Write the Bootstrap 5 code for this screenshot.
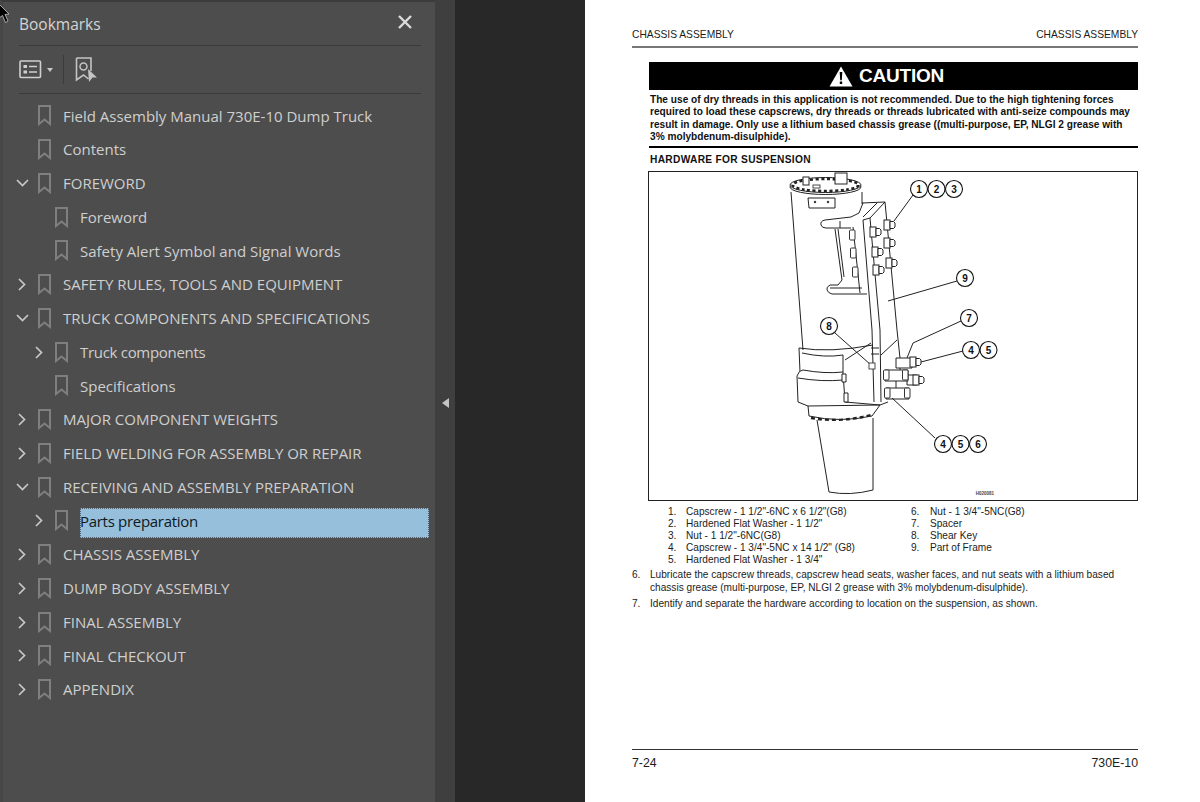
<!DOCTYPE html>
<html lang="en">
<head>
  <meta charset="UTF-8" />
  <meta name="viewport" content="width=device-width, initial-scale=1" />
  <title>Bookmarks</title>
  <link href="https://cdn.jsdelivr.net/npm/bootstrap@5.3.0/dist/css/bootstrap.min.css" rel="stylesheet" />
  <style>
    html, body { height: 802px; overflow: hidden; background: #282828; }
    .viewer { height: 802px; position: relative; }
    .side-pane { width: 435px; background: #4d4d4d; border-top: 2px solid #3c3c3c; border-left: 3px solid #474747; font-family: "Open Sans", "Noto Sans", sans-serif; }
    .pane-head { height: 44px; margin: 0 14px 0 16px; border-bottom: 1px solid #3a3a3a; color: #d4d4d4; font-size: 15.5px; }
    .pane-title { margin-top: 2px; }
    .pane-tools { height: 48px; margin: 0 14px 0 16px; border-bottom: 1px solid #3a3a3a; }
    .tool-sep { width: 1px; height: 29px; background: #3c3c3c; margin: 0 11px 0 10px; }
    .caret-down { width: 0; height: 0; border-left: 3.5px solid transparent; border-right: 3.5px solid transparent; border-top: 4px solid #c8c8c8; margin: 0 0 0 5px; }
    .mark-list { margin: 5px 0 0; padding: 0; list-style: none; }
    .mark-row { height: 33.75px; color: #cfcfcf; font-size: 15px; white-space: nowrap; padding-left: 10px; }
    .mark-row.lvl2 { padding-left: 27px; }
    .mark-row.tight { letter-spacing: -.3px; }
    .chev-slot { width: 18px; flex: none; }
    .mark-ico { margin: 0 12px 0 7px; flex: none; }
    .mark-sel { background: #95bfdb; color: #101820; outline: 1px dotted #50606c; outline-offset: -1px; width: 349px; height: 30px; line-height: 26px; margin-top: 5px; }
    .collapse-strip { width: 20px; background: #3f3f3f; }
    .collapse-arrow { width: 0; height: 0; border-top: 5.5px solid transparent; border-bottom: 5.5px solid transparent; border-right: 7px solid #c4c4c4; margin-top: 3px; }
    .dark-gap { width: 130px; background: #282828; }
    .doc-page { width: 615px; background: #fff; color: #1c1c1c; padding: 28px 62px 0 47px; font-family: "Liberation Sans", Arial, sans-serif; font-size: 10.12px; line-height: 12.1px; }
    .run-head { height: 20px; border-bottom: 2px solid #777; font-size: 10.25px; line-height: 14px; }
    .page-body { padding-left: 17px; }
    .caution-bar { height: 28px; margin-top: 14px; padding-right: 14px; background: #000; color: #fff; font-size: 19px; font-weight: 700; line-height: 28px; letter-spacing: -.2px; gap: 6px; }
    .caution-text { font-weight: 700; font-size: 10.13px; line-height: 12.3px; color: #111; padding: 4px 0 4px 1px; border-bottom: 2.5px solid #000; height: 58px; }
    .hw-title { font-weight: 700; font-size: 10.2px; margin: 6px 0 0 1px; height: 17px; color: #111; letter-spacing: .3px; }
    .fig-box { height: 330px; margin-left: -1px; border: 1px solid #222; }
    .fig-box svg { display: block; }
    .parts-wrap { padding: 5px 0 0 19px; margin-bottom: -1px; }
    .parts-col { width: 243px; }
    .part-line { display: flex; }
    .part-num { width: 18px; flex: none; }
    .parts-col + div .part-num { width: 19px; }
    .step-line { display: flex; margin-left: -17px; }
    .step-num { width: 18px; flex: none; }
    .run-foot { position: absolute; left: 47px; right: 62px; top: 749px; border-top: 1.5px solid #333; padding-top: 6px; font-size: 12.3px; line-height: 14px; }
    .mouse-ptr { position: absolute; left: 0; top: 4px; }
  </style>
</head>
<body>
  <div class="viewer d-flex">
    <div class="side-pane flex-shrink-0">
      <div class="pane-head d-flex align-items-center justify-content-between">
        <span class="pane-title">Bookmarks</span>
        <svg width="16" height="16" viewBox="0 0 16 16" class="me-2 mb-1"><path d="M2 2 14 14M14 2 2 14" stroke="#dcdcdc" stroke-width="2.4" fill="none"/></svg>
      </div>
      <div class="pane-tools d-flex align-items-center">
        <svg width="23" height="19" viewBox="0 0 23 19">
          <rect x="1" y="1" width="20.5" height="16.5" rx="1" fill="none" stroke="#cfcfcf" stroke-width="1.6"/>
          <rect x="4.5" y="5" width="3.5" height="3" fill="#cfcfcf"/><rect x="4.5" y="10.5" width="3.5" height="3" fill="#cfcfcf"/>
          <path d="M10 6.5h8M10 12h8" stroke="#cfcfcf" stroke-width="1.6"/>
        </svg>
        <span class="caret-down"></span>
        <span class="tool-sep"></span>
        <svg width="23" height="26" viewBox="0 0 23 26">
          <path d="M1.5 1h14.500v13M1.500 1v22l7-5 5 4" fill="none" stroke="#c4c4c4" stroke-width="1.6"/>
          <circle cx="8.5" cy="9.5" r="3.5" fill="none" stroke="#c4c4c4" stroke-width="1.5"/>
          <path d="M13 12 22 20.500 17.500 20.500 14 25z" fill="#c4c4c4"/>
        </svg>
      </div>
      <ul class="mark-list" id="marks"></ul>
    </div>
    <div class="collapse-strip flex-shrink-0 d-flex align-items-center justify-content-center"><span class="collapse-arrow"></span></div>
    <div class="dark-gap flex-shrink-0"></div>
    <div class="doc-page flex-shrink-0 position-relative">
      <div class="run-head d-flex justify-content-between"><span>CHASSIS ASSEMBLY</span><span>CHASSIS ASSEMBLY</span></div>
      <div class="page-body">
        <div class="caution-bar d-flex justify-content-center align-items-center">
          <svg width="24" height="21" viewBox="0 0 24 21"><path d="M12 .5 23.500 20.500H.5z" fill="#fff"/><path d="M10.700 6h2.600l-.5 8.200h-1.600zM10.800 15.500h2.400v2.600h-2.400z" fill="#000"/></svg>
          <span>CAUTION</span>
        </div>
        <div class="caution-text">The use of dry threads in this application is not recommended. Due to the high tightening forces required to load these capscrews, dry threads or threads lubricated with anti-seize compounds may result in damage. Only use a lithium based chassis grease ((multi-purpose, EP, NLGI 2 grease with 3% molybdenum-disulphide).</div>
        <div class="hw-title">HARDWARE FOR SUSPENSION</div>
        <div class="fig-box">
          <svg width="488" height="328" viewBox="649 172 488 328" font-family="Liberation Sans, Arial, sans-serif">
            <defs>
              <g id="bolt"><rect x="-5" y="-5" width="6" height="10" fill="#fff" stroke="#222" stroke-width="1"/><path d="M1-3.500h3.500l1.500 1.500v4l-1.500 1.500H1z" fill="#fff" stroke="#222" stroke-width="1"/></g>
              <g id="boltsm"><rect x="-2.500" y="-5" width="5.500" height="10" rx="1" fill="#fff" stroke="#333" stroke-width="1"/></g>
            </defs>
            <g fill="none" stroke="#222" stroke-width="1" stroke-linejoin="round">
              <!-- cone and its flange -->
              <path d="M817 420 829 492Q850 496 873 490L873 418" fill="#fff"/>
              <path d="M808 406 809 416Q840 423 872 416L880 405" fill="#fff"/>
              <path d="M811 418q30 5 60-3" stroke-width="2.400" stroke-dasharray="4 3"/>
              <!-- barrel -->
              <path d="M791 192 803 350M862 192V204"/>
              <path d="M808 198h27v10h-26z"/>
              <circle cx="815" cy="202" r=".8" fill="#222"/><circle cx="828" cy="202" r=".8" fill="#222"/>
              <!-- bracket arms -->
              <path d="M863 203 859 213 851 217 825 220Q820 221 821 225 822 228 826 228L851 228"/>
              <path d="M835 229 842 280 838 285 830 285Q826 287 827 290 828 293 832 294L867 294"/>
              <path d="M838 229 844 277M830 288H862M853 227 860 293M840 221V228"/>
              <!-- frame plate -->
              <path d="M862 203 885 202 897 330 900 358"/>
              <path d="M885 202 870 218 863 220 872 330 874 402M870 218 880 330 881 402M877 203 863 217"/>
              <path d="M897 340 881 355M845 360 871 343"/>
              <path d="M871 348H879M871 354H879"/>
              <path d="M880 405 888 402"/>
              <!-- collar -->
              <path d="M799 348Q830 353 873 345" fill="none"/>
              <path d="M799 348 800 372M802 353Q825 358 843 355"/>
              <path d="M797 376Q799 370 803 370Q825 374 843 372L845 402 880 405 808 406 798 402z" fill="#fff"/>
              <path d="M843 355V372M798 378Q822 382 843 380"/>
              <rect x="842" y="374" width="4" height="8" fill="#fff"/><rect x="844" y="393" width="4" height="9" fill="#fff"/>
              <!-- spacer blocks on the lower bolts -->
              <rect x="896" y="358" width="16" height="10" fill="#fff"/>
              <path d="M900 368v3M896 381v7"/>
              <rect x="907" y="375" width="10" height="10" fill="#fff"/>
              <rect x="885" y="370" width="23" height="11" fill="#fff"/>
              <rect x="886" y="388" width="23" height="11" fill="#fff"/>
            </g>
            <use href="#bolt" x="915" y="362"/><use href="#bolt" x="918" y="380"/>
            <use href="#boltsm" x="886" y="375"/><use href="#boltsm" x="887" y="393"/><use href="#boltsm" x="905" y="375"/><use href="#boltsm" x="907" y="393"/>
            <use href="#bolt" x="889" y="225"/><use href="#bolt" x="889" y="243"/><use href="#bolt" x="891" y="263"/>
            <use href="#bolt" x="875" y="232"/><use href="#bolt" x="877" y="252"/><use href="#bolt" x="878" y="270"/>
            <use href="#boltsm" x="852" y="235"/><use href="#boltsm" x="853" y="253"/><use href="#boltsm" x="855" y="272"/>
            <!-- flange on top of the barrel -->
            <ellipse cx="825.500" cy="187" rx="35.500" ry="7.500" fill="#fff" stroke="#222" stroke-width="1"/>
            <ellipse cx="825.500" cy="185" rx="35.500" ry="7.500" fill="#fff" stroke="#222" stroke-width="1"/>
            <ellipse cx="825.500" cy="185" rx="33" ry="6" fill="none" stroke="#222" stroke-width="2.600" stroke-dasharray="3 2.500"/>
            <rect x="803" y="177" width="6" height="8" fill="#fff" stroke="#222" stroke-width="1"/>
            <rect x="835" y="173" width="12" height="11" fill="#fff" stroke="#222" stroke-width="1"/>
            <rect x="813" y="185" width="7" height="3" fill="#fff" stroke="#222" stroke-width=".8"/>
            <!-- leaders -->
            <g stroke="#222" stroke-width="1" fill="none">
              <path d="M913 195 894 221M957 281 888 301M961 321 913 343 907 358M835 333 871 365M963 351 921 362M935 438 892 398"/>
            </g>
            <rect x="869" y="363" width="6" height="6" fill="#fff" stroke="#222" stroke-width=".8"/>
            <!-- callouts -->
            <g id="callouts" fill="#fff" stroke="#111" stroke-width="1.100"></g>
            <g id="callout-nums" fill="#111" font-size="10" font-weight="700" text-anchor="middle"></g>
            <text x="985" y="495" font-size="4.500" font-weight="700" fill="#444" text-anchor="middle">H020081</text>
          </svg>
        </div>
        <div class="parts-wrap d-flex">
          <div class="parts-col">
            <div class="part-line"><span class="part-num">1.</span><span>Capscrew - 1 1/2"-6NC x 6 1/2"(G8)</span></div>
            <div class="part-line"><span class="part-num">2.</span><span>Hardened Flat Washer - 1 1/2"</span></div>
            <div class="part-line"><span class="part-num">3.</span><span>Nut - 1 1/2"-6NC(G8)</span></div>
            <div class="part-line"><span class="part-num">4.</span><span>Capscrew - 1 3/4"-5NC x 14 1/2" (G8)</span></div>
            <div class="part-line"><span class="part-num">5.</span><span>Hardened Flat Washer - 1 3/4"</span></div>
          </div>
          <div>
            <div class="part-line"><span class="part-num">6.</span><span>Nut - 1 3/4"-5NC(G8)</span></div>
            <div class="part-line"><span class="part-num">7.</span><span>Spacer</span></div>
            <div class="part-line"><span class="part-num">8.</span><span>Shear Key</span></div>
            <div class="part-line"><span class="part-num">9.</span><span>Part of Frame</span></div>
          </div>
        </div>
        <div class="step-line mt-1"><span class="step-num">6.</span><span>Lubricate the capscrew threads, capscrew head seats, washer faces, and nut seats with a lithium based chassis grease (multi-purpose, EP, NLGI 2 grease with 3% molybdenum-disulphide).</span></div>
        <div class="step-line mt-1"><span class="step-num">7.</span><span>Identify and separate the hardware according to location on the suspension, as shown.</span></div>
      </div>
      <div class="run-foot d-flex justify-content-between"><span>7-24</span><span>730E-10</span></div>
    </div>
    <svg class="mouse-ptr" width="12" height="22" viewBox="0 0 12 22"><path d="M-1 0 9 10 5 10.500 8 17 5.500 18.500 2.500 11.500-1 14z" fill="#000" stroke="#ddd" stroke-width=".7"/></svg>
  </div>

  <script>
    // [label, level, chevron state, selected, tight]
    const marks = [
      ["Field Assembly Manual 730E-10 Dump Truck", 1, "", false],
      ["Contents", 1, "", false],
      ["FOREWORD", 1, "open", false],
      ["Foreword", 2, "", false],
      ["Safety Alert Symbol and Signal Words", 2, "", false],
      ["SAFETY RULES, TOOLS AND EQUIPMENT", 1, "closed", false],
      ["TRUCK COMPONENTS AND SPECIFICATIONS", 1, "open", false],
      ["Truck components", 2, "closed", false, true],
      ["Specifications", 2, "", false],
      ["MAJOR COMPONENT WEIGHTS", 1, "closed", false],
      ["FIELD WELDING FOR ASSEMBLY OR REPAIR", 1, "closed", false],
      ["RECEIVING AND ASSEMBLY PREPARATION", 1, "open", false],
      ["Parts preparation", 2, "closed", true, true],
      ["CHASSIS ASSEMBLY", 1, "closed", false],
      ["DUMP BODY ASSEMBLY", 1, "closed", false],
      ["FINAL ASSEMBLY", 1, "closed", false],
      ["FINAL CHECKOUT", 1, "closed", false],
      ["APPENDIX", 1, "closed", false]
    ];
    const chevrons = {
      open: '<svg width="13" height="8" viewBox="0 0 13 8"><path d="M1 1l5.500 5.500L12 1" fill="none" stroke="#c8c8c8" stroke-width="1.700"/></svg>',
      closed: '<svg width="8" height="13" viewBox="0 0 8 13"><path d="M1 1l5.500 5.500L1 12" fill="none" stroke="#c8c8c8" stroke-width="1.700"/></svg>',
      "": ""
    };
    const bookmarkIcon = '<svg class="mark-ico" width="13" height="21" viewBox="0 0 13 21"><path d="M1 1h11v18l-5.500-4.500L1 19z" fill="none" stroke="#7f7f7f" stroke-width="2"/></svg>';
    document.getElementById("marks").innerHTML = marks.map(m => `
      <li class="mark-row d-flex align-items-center ${m[1] === 2 ? "lvl2" : ""} ${m[4] ? "tight" : ""}">
        <span class="chev-slot d-flex justify-content-center">${chevrons[m[2]]}</span>
        ${bookmarkIcon}
        <span class="${m[3] ? "mark-sel" : ""}">${m[0]}</span>
      </li>`).join("");

    const callouts = [
      ["1",919,189],["2",936.5,189],["3",954,189],["9",965,278],["7",969,318],["8",829,326],
      ["4",971,350],["5",988.5,350],["4",943,444],["5",960.5,444],["6",978,444]
    ];
    const ns = "http://www.w3.org/2000/svg";
    callouts.forEach(c => {
      const circle = document.createElementNS(ns, "circle");
      circle.setAttribute("cx", c[1]); circle.setAttribute("cy", c[2]); circle.setAttribute("r", 8.5);
      document.getElementById("callouts").appendChild(circle);
      const t = document.createElementNS(ns, "text");
      t.setAttribute("x", c[1]); t.setAttribute("y", c[2] + 3.6); t.textContent = c[0];
      document.getElementById("callout-nums").appendChild(t);
    });
  </script>
  <script src="https://cdn.jsdelivr.net/npm/bootstrap@5.3.0/dist/js/bootstrap.bundle.min.js"></script>
</body>
</html>
